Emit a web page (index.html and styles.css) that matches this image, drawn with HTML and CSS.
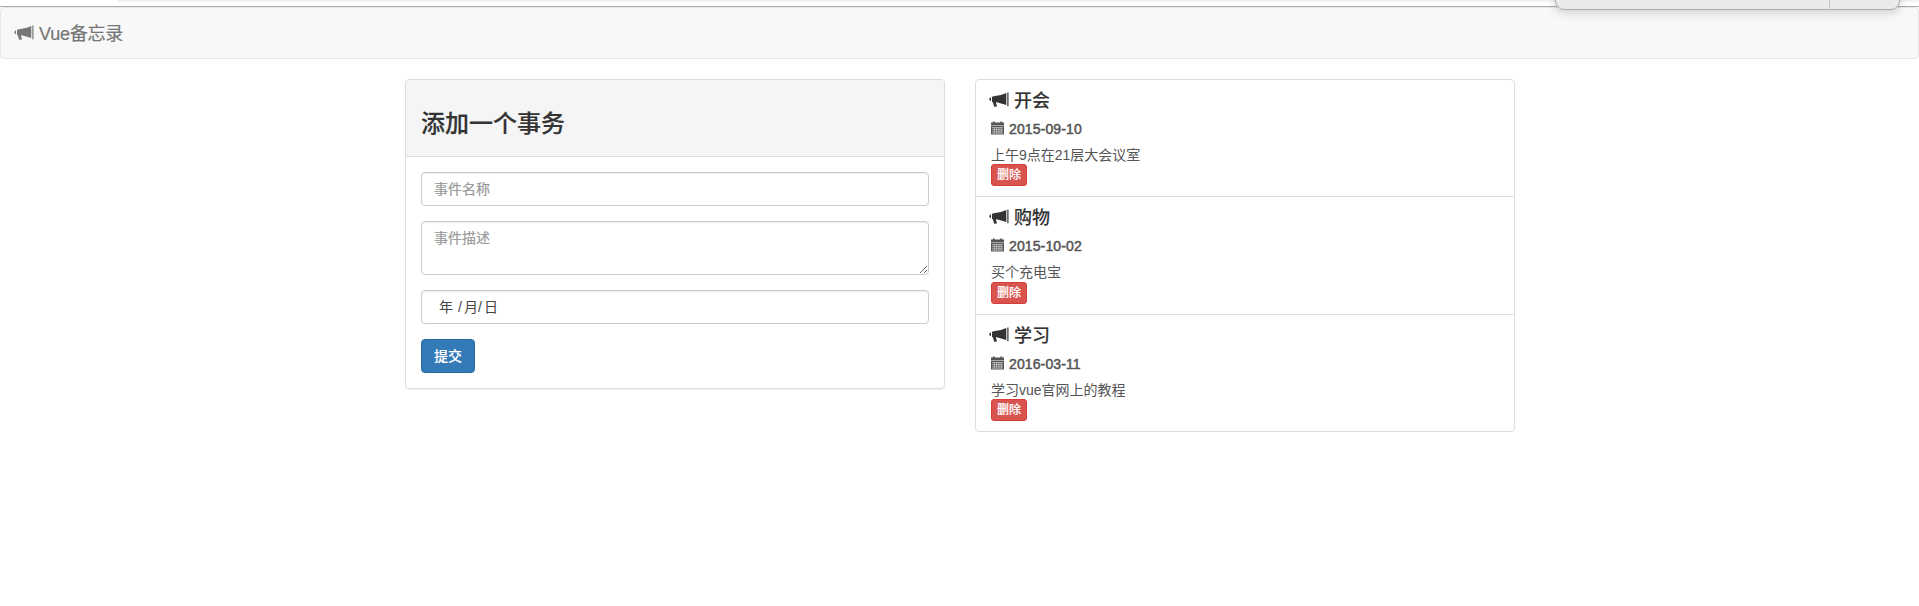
FILE: index.html
```html
<!DOCTYPE html>
<html lang="zh-CN">
<head>
<meta charset="utf-8">
<title>Vue备忘录</title>
<link rel="stylesheet" href="styles.css">
</head>
<body>
<svg class="defs" aria-hidden="true">
  <symbol id="horn" viewBox="0 0 20 16">
    <path d="M18.3.5h1.2v13.8h-1.2zM17.3 1v12L8.6 10.4l-1.7-.1L8 14.4l-2.8.4-1.4-4.5-.8-.4V4.7l3-.7q6-.4 11.300-3zM2 5.300v4L.6 8.200Q0 7.300.6 6.300z"/>
  </symbol>
  <symbol id="calendar" viewBox="0 0 14 14">
    <path d="M2 0h2v1h6V0h2v1h2v3H0V1h2zM0 4.700h14V14H0z"/>
    <path class="grid-lines" d="M1 6.500h12M1 8.500h12M1 10.500h12M1 12.500h12M3.500 6v7M6 6v7M8.500 6v7M11 6v7"/>
  </symbol>
</svg>
<div class="chrome"></div>
<div class="popover"></div>
<nav class="navbar"><svg class="horn"><use href="#horn"/></svg><span>Vue备忘录</span></nav>
<main class="container">
  <section class="panel">
    <div class="panel-heading"><h3>添加一个事务</h3></div>
    <form class="panel-body">
      <input class="control" placeholder="事件名称">
      <textarea class="control area" placeholder="事件描述"></textarea>
      <div class="control date"><span class="year">年</span><span>/</span><span>月</span><span>/</span><span>日</span></div>
      <button class="submit" type="button">提交</button>
    </form>
  </section>
  <section class="list">
    <article class="item">
      <h4><svg class="horn"><use href="#horn"/></svg><span>开会</span></h4>
      <h5><svg class="calendar"><use href="#calendar"/></svg>2015-09-10</h5>
      <p>上午9点在21层大会议室</p>
      <button class="delete">删除</button>
    </article>
    <article class="item">
      <h4><svg class="horn"><use href="#horn"/></svg><span>购物</span></h4>
      <h5><svg class="calendar"><use href="#calendar"/></svg>2015-10-02</h5>
      <p>买个充电宝</p>
      <button class="delete">删除</button>
    </article>
    <article class="item">
      <h4><svg class="horn"><use href="#horn"/></svg><span>学习</span></h4>
      <h5><svg class="calendar"><use href="#calendar"/></svg>2016-03-11</h5>
      <p>学习vue官网上的教程</p>
      <button class="delete">删除</button>
    </article>
  </section>
</main>
</body>
</html>
```
FILE: styles.css
```css
* { box-sizing: border-box; }
body {
  margin: 0;
  font: 14px/20px "Liberation Sans", "Noto Sans CJK SC", sans-serif;
  color: #333;
  background: #fff;
  overflow: hidden;
}
h3, h4, h5, p { margin: 0; }
svg { fill: currentColor; flex: none; }
.defs { position: absolute; width: 0; height: 0; }
.chrome { height: 7px; border-bottom: 1px solid #adadad; background: linear-gradient(#f1f1f1, #f1f1f1) 118px 0 / 100% 2px no-repeat #fff; }
.popover {
  position: absolute; top: -20px; left: 1555px; width: 345px; height: 30px;
  border: 1px solid #adadaf; border-radius: 9px;
  background: linear-gradient(90deg, transparent 273px, #c4c4c6 273px 274px, transparent 274px) #eaeaec;
  box-shadow: 0 3px 10px rgba(0, 0, 0, .16);
}
.navbar {
  height: 52px; padding: 0 14px 0 13px;
  display: flex; align-items: center; gap: 5px;
  font-size: 18px; letter-spacing: -.2px; color: #777;
  background: #f8f8f8; border: 1px solid #e7e7e7; border-radius: 4px;
}
.navbar span { padding-top: 2px; -webkit-text-stroke: .2px currentColor; }
.horn { width: 20px; height: 16px; }
.container { display: grid; grid-template-columns: 540px 540px; gap: 30px; width: 1110px; margin: 20px 0 0 405px; align-items: start; }
.panel, .list { border: 1px solid #ddd; border-radius: 4px; box-shadow: 0 1px 1px rgba(0, 0, 0, .05); }
.panel { height: 310px; }
.list { box-shadow: none; }
.panel-heading { height: 77px; padding: 31px 15px 0; background: #f5f5f5; border-bottom: 1px solid #ddd; border-radius: 3px 3px 0 0; }
h3 { font-size: 24px; line-height: 26px; font-weight: 500; -webkit-text-stroke: .2px currentColor; }
.panel-body { display: flex; flex-direction: column; align-items: flex-start; gap: 15px; padding: 15px; }
.control {
  display: block; width: 100%; height: 34px; margin: 0; padding: 6px 12px;
  font: inherit; color: #555; background: #fff;
  border: 1px solid #ccc; border-radius: 4px;
  box-shadow: inset 0 1px 1px rgba(0, 0, 0, .075);
}
.control::placeholder { color: #999; -webkit-text-stroke: .2px currentColor; }
.area { height: 54px; resize: vertical; }
.date { display: flex; padding-left: 17px; color: #444; }
.date .year { margin-right: 5px; }
.date span:nth-child(even) { width: 6px; }
.submit {
  width: 54px; height: 34px; padding: 0; font: inherit; font-weight: 500;
  color: #fff; background: #337ab7; border: 1px solid #2e6da4; border-radius: 4px;
  -webkit-text-stroke: .1px currentColor;
}
.item { height: 118px; padding: 10px 15px; border-bottom: 1px solid #ddd; color: #555; }
.item:first-child { height: 117px; }
.item:last-child { height: 116px; border: 0; }
h4 { display: flex; align-items: center; gap: 5px; height: 20px; margin-left: -2px; font-size: 18px; font-weight: 500; color: #333; }
h4 span { padding-top: 2px; -webkit-text-stroke: .1px currentColor; }
h5 { display: flex; align-items: center; gap: 5px; height: 16px; margin: 11px 0 8px; font-size: 14px; font-weight: 400; letter-spacing: .12px; -webkit-text-stroke: .5px currentColor; }
.calendar { width: 13px; height: 14px; margin-bottom: 2px; -webkit-text-stroke: 0; }
.grid-lines { stroke: #fff; stroke-width: .5; fill: none; }
.item p { height: 19px; }
.item:nth-child(2) p { height: 20px; }
.delete {
  display: block; width: 36px; height: 22px; padding: 0;
  font: 500 12px/18px "Liberation Sans", "Noto Sans CJK SC", sans-serif;
  color: #fff; background: #d9534f; border: 1px solid #d43f3a; border-radius: 3px;
  -webkit-text-stroke: .15px currentColor;
}
```
